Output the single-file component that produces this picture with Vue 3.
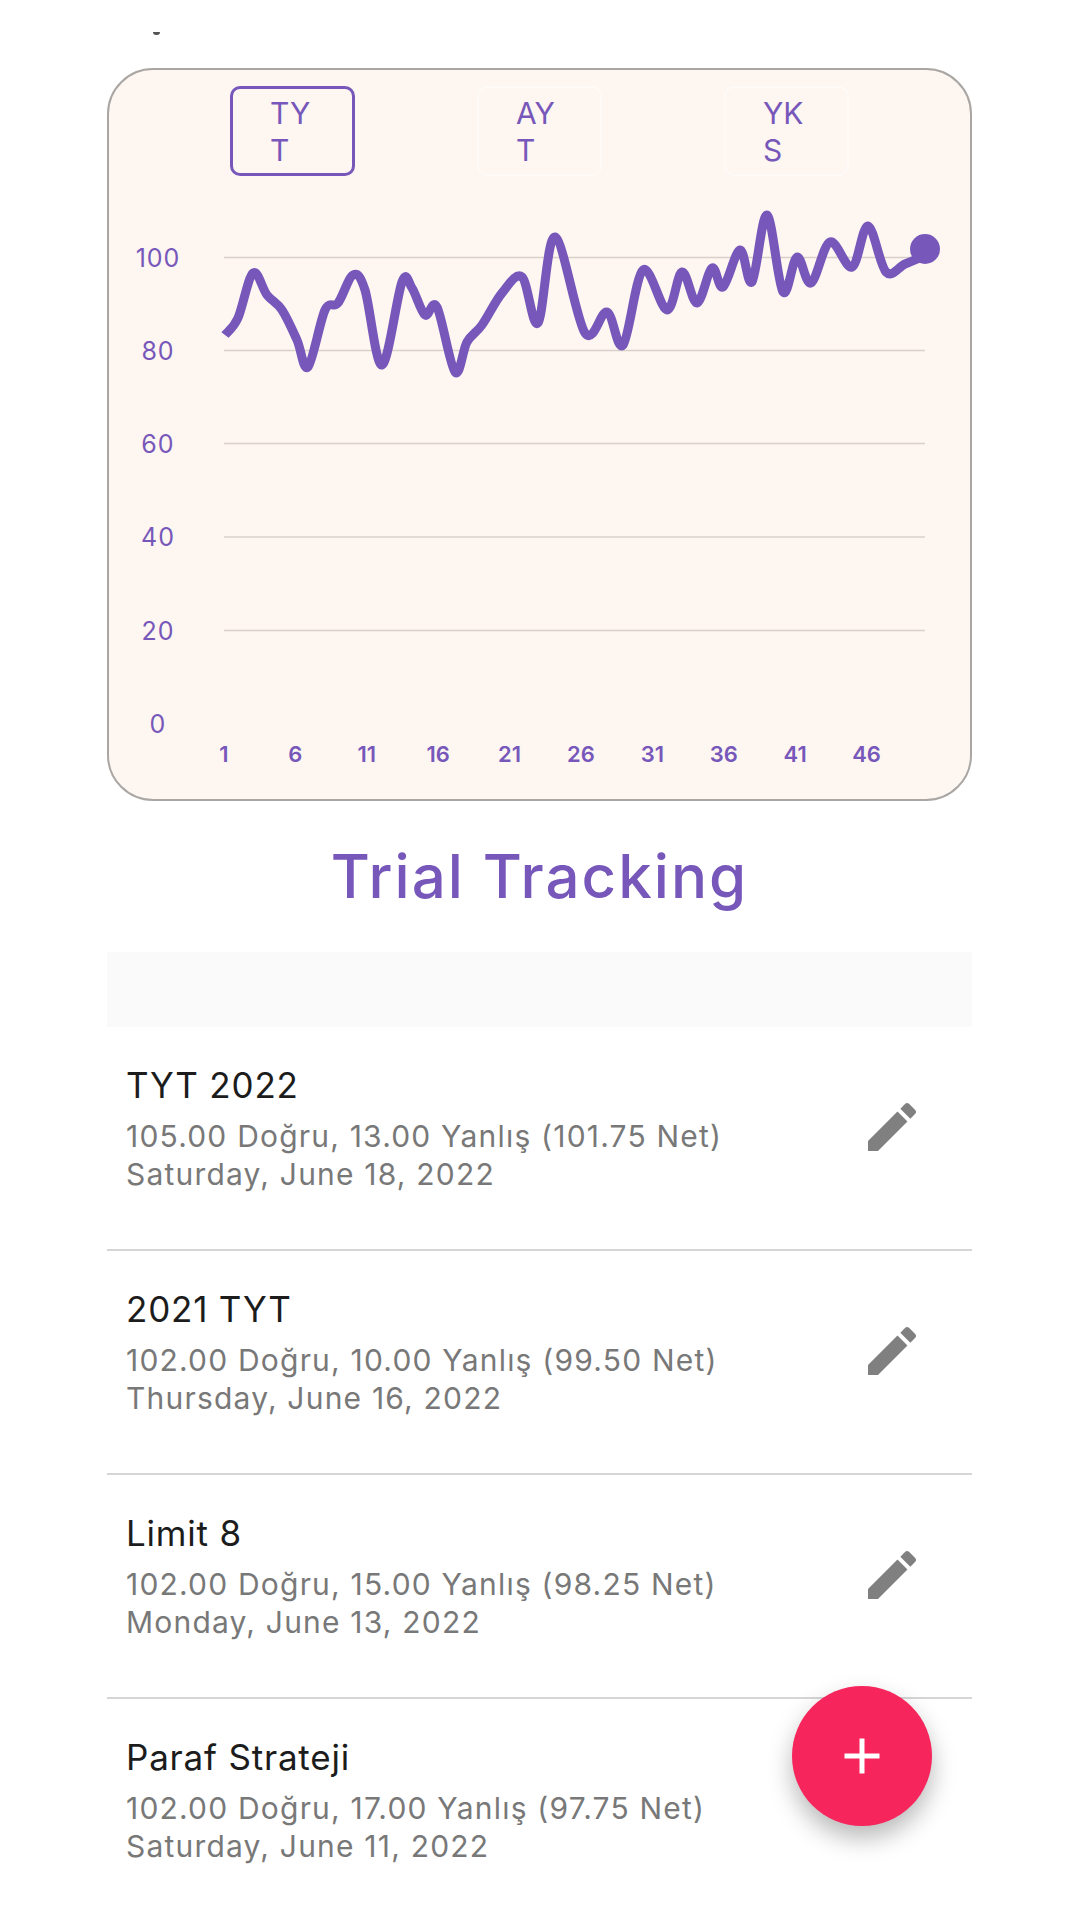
<script setup>
import { computed } from 'vue'

const tabs = [
  { label: 'TYT', active: true },
  { label: 'AYT', active: false },
  { label: 'YKS', active: false }
]

const gridLines = [
  { label: '100', y: 257.5 },
  { label: '80', y: 350.5 },
  { label: '60', y: 443.5 },
  { label: '40', y: 537 },
  { label: '20', y: 630.5 },
  { label: '0', y: 724 }
]

const xLabels = ['1', '6', '11', '16', '21', '26', '31', '36', '41', '46'].map((label, i) => ({
  label,
  x: 224 + i * 71.4
}))

// traced from the trial results, page coordinates
const points = [
  [225, 335], [238, 318], [253, 273], [267, 295], [282, 310], [297, 340], [308, 367], [325, 310],
  [338, 303], [353, 275], [365, 290], [382, 365], [402, 282], [412, 288], [425, 315], [437, 307],
  [455, 372], [467, 342], [482, 325], [502, 293], [522, 277], [538, 323], [555, 237], [585, 333],
  [607, 312], [623, 345], [643, 270], [667, 310], [682, 272], [697, 303], [712, 268], [723, 287],
  [740, 250], [752, 282], [767, 215], [783, 292], [797, 257], [811, 283], [830, 242], [852, 267],
  [868, 226], [886, 272], [905, 264], [924, 256]
]

const linePath = computed(() => {
  let d = `M${points[0][0]} ${points[0][1]}`
  for (let i = 0; i < points.length - 1; i++) {
    const p0 = points[i - 1] || points[i]
    const p1 = points[i]
    const p2 = points[i + 1]
    const p3 = points[i + 2] || p2
    const c1x = p1[0] + (p2[0] - p0[0]) / 6
    const c1y = p1[1] + (p2[1] - p0[1]) / 6
    const c2x = p2[0] - (p3[0] - p1[0]) / 6
    const c2y = p2[1] - (p3[1] - p1[1]) / 6
    d += ` C${c1x} ${c1y} ${c2x} ${c2y} ${p2[0]} ${p2[1]}`
  }
  return d
})

const trials = [
  { name: 'TYT 2022', score: '105.00 Doğru, 13.00 Yanlış (101.75 Net)', date: 'Saturday, June 18, 2022' },
  { name: '2021 TYT', score: '102.00 Doğru, 10.00 Yanlış (99.50 Net)', date: 'Thursday, June 16, 2022' },
  { name: 'Limit 8', score: '102.00 Doğru, 15.00 Yanlış (98.25 Net)', date: 'Monday, June 13, 2022' },
  { name: 'Paraf Strateji', score: '102.00 Doğru, 17.00 Yanlış (97.75 Net)', date: 'Saturday, June 11, 2022' }
]
</script>

<template>
  <div class="page">
    <div class="top-bit"><span class="clipped-mark"></span></div>

    <div class="content">
      <div class="chart-card">
        <div class="tabs">
          <div v-for="tab in tabs" :key="tab.label" class="tab" :class="{ active: tab.active }">
            <span class="tab-text">{{ tab.label }}</span>
          </div>
        </div>

        <svg class="chart" viewBox="109 176 861 623" width="861" height="623">
          <g v-for="line in gridLines" :key="line.label">
            <line v-if="line.label !== '0'" x1="224" x2="925" :y1="line.y" :y2="line.y" class="grid-line" />
            <text x="158" :y="line.y + 9" class="y-label">{{ line.label }}</text>
          </g>
          <text v-for="tick in xLabels" :key="tick.label" :x="tick.x" y="762" class="x-label">{{ tick.label }}</text>
          <path :d="linePath" class="series" />
          <circle cx="925" cy="249" r="15" class="series-dot" />
        </svg>
      </div>

      <h1 class="title">Trial Tracking</h1>

      <div class="filter-band"></div>

      <div class="trial-list">
        <div v-for="(trial, idx) in trials" :key="trial.name" class="trial-row">
          <div class="trial-text">
            <div class="trial-name">{{ trial.name }}</div>
            <div class="trial-meta">{{ trial.score }}</div>
            <div class="trial-meta">{{ trial.date }}</div>
          </div>
          <svg v-if="idx < 3" class="edit-icon" viewBox="0 0 24 24" width="64" height="64">
            <path d="M3 17.25V21h3.75L17.81 9.94l-3.75-3.75L3 17.25zM20.71 7.04c.39-.39.39-1.02 0-1.41l-2.34-2.34c-.39-.39-1.02-.39-1.41 0l-1.83 1.83 3.75 3.75 1.83-1.83z" />
          </svg>
        </div>
      </div>
    </div>

    <button class="fab">
      <svg viewBox="0 0 24 24" width="60" height="60">
        <path d="M19 13h-6v6h-2v-6H5v-2h6V5h2v6h6v2z" />
      </svg>
    </button>
  </div>
</template>

<style scoped>
.page {
  position: relative; width: 1080px; height: 1920px; overflow: hidden; background: #fff;
  font-family: Inter, 'Noto Sans', sans-serif;
}
.top-bit { height: 68px; position: relative; }
.clipped-mark {
  position: absolute; left: 153px; top: 32px; width: 7px; height: 3px; background: #555; border-radius: 0 0 4px 4px;
}
.content { margin: 0 108px 0 107px; }

.chart-card {
  height: 733px; box-sizing: border-box; background: #fdf6f1;
  border: 2px solid #a9a6a3; border-radius: 46px;
}
.tabs { display: flex; justify-content: center; gap: 122px; padding-top: 16px; }
.tab {
  width: 125px; height: 90px; box-sizing: border-box; padding: 2px 0 0 37px;
  border: 2px solid #fefaf7; border-radius: 10px; color: #7758ba;
  font-size: 30px; line-height: 37px; display: flex; align-items: center;
}
.tab.active { border: 3px solid #7758ba; }
.tab-text { width: 46px; word-break: break-all; }

.chart { display: block; }
.grid-line { stroke: #d9d0ca; stroke-width: 1.5; }
.y-label { fill: #7758ba; font-size: 25px; letter-spacing: 1px; text-anchor: middle; }
.x-label { fill: #7758ba; font-size: 22px; font-weight: 600; text-anchor: middle; }
.series { fill: none; stroke: #7758ba; stroke-width: 9; stroke-linejoin: round; }
.series-dot { fill: #7758ba; }

.title {
  margin: 0; height: 151px; line-height: 151px; text-align: center;
  font-size: 60px; font-weight: 500; letter-spacing: 2px; color: #7758ba;
}
.filter-band { height: 75px; background: #fafafa; }

.trial-row {
  height: 224px; box-sizing: border-box; padding: 36px 19px 0; border-bottom: 2px solid #d6d6d6;
  display: flex; justify-content: space-between;
}
.trial-name { font-size: 35px; line-height: 44px; letter-spacing: 0.8px; color: #1c1c1c; margin-bottom: 10px; }
.trial-meta { font-size: 30px; line-height: 38px; letter-spacing: 1.2px; color: #787878; }
.edit-icon { fill: #808080; margin: 0 29px 0 0; position: relative; top: 32px; }

.fab {
  position: absolute; left: 792px; top: 1686px; width: 140px; height: 140px; padding: 0;
  border: none; border-radius: 50%; background: #f6255b;
  box-shadow: 0 12px 24px rgba(0, 0, 0, 0.28);
  display: flex; align-items: center; justify-content: center;
}
.fab svg { fill: #fff; }
</style>
